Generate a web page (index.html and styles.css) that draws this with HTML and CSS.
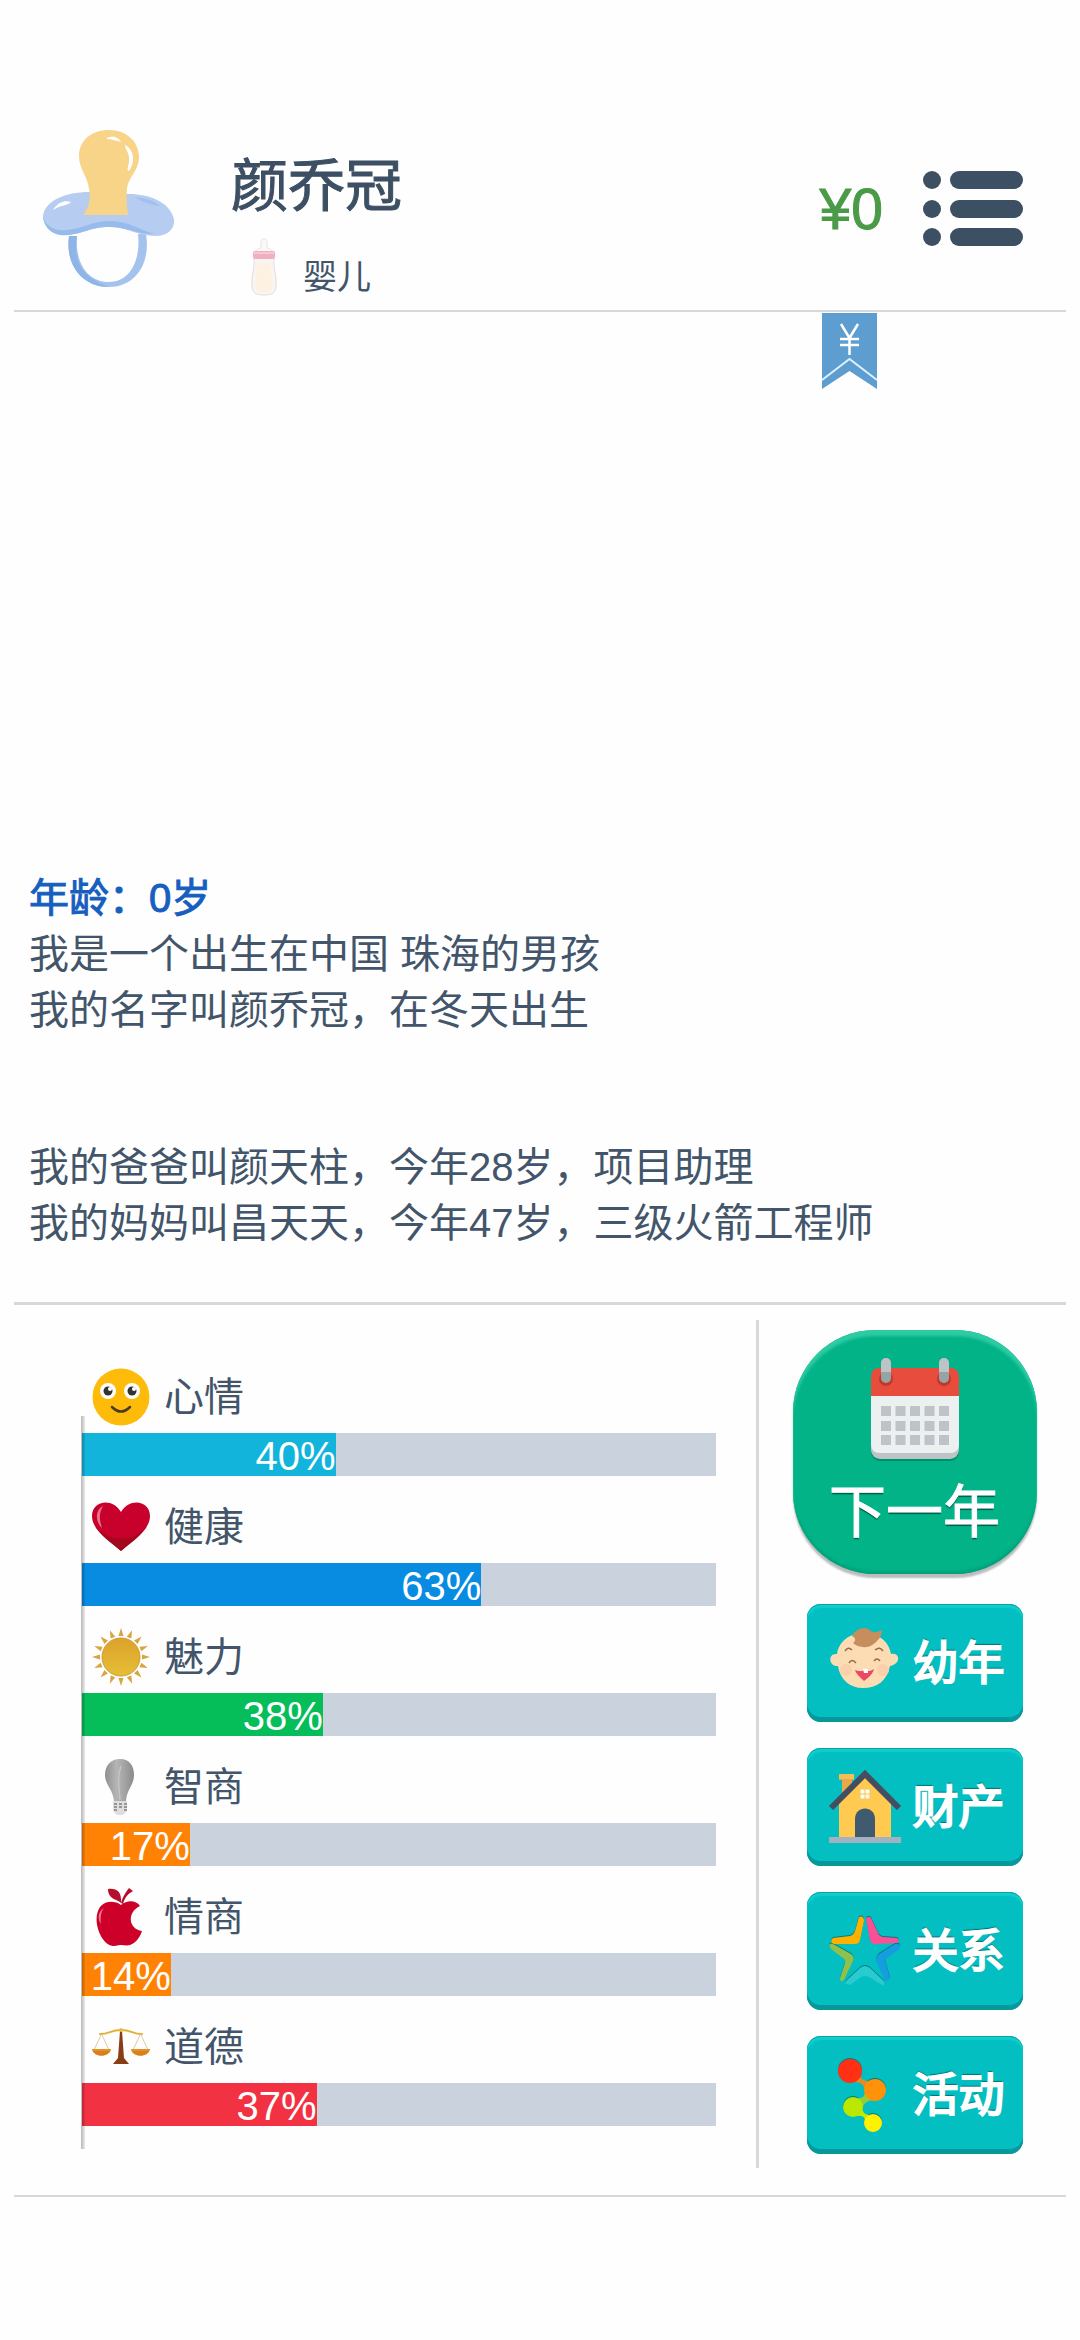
FILE: index.html
```html
<!DOCTYPE html>
<html lang="zh-CN">
<head>
    <meta charset="UTF-8">
    <meta name="viewport" content="width=device-width, initial-scale=1">
    <title>人生模拟</title>
    <link rel="stylesheet" href="styles.css">
</head>
<body>
    <header class="header">
        <svg class="avatar" viewBox="0 0 132 158">
            <path d="M26 106 C22 136 40 157 66 157 C92 157 108 134 103 104 L95 104 C98 132 86 152 66 152 C45 152 32 134 34 106 Z" fill="#a3c3ee"/>
            <path d="M26 106 C22 136 40 157 66 157 C50 151 28 140 34 106 Z" fill="#8fb5e6"/>
            <path d="M47 62 C20 62 0 72 0 88 C2 100 12 106 26 105 C42 103 48 97 66 97 C84 97 92 105 112 106 C125 106 132 99 131 89 C127 73 108 64 86 64 Z" fill="#b6cdf1"/>
            <path d="M0 84 C0 95 12 102 24 100 C42 98 46 92 66 91 C86 91 96 100 112 104 C96 105 84 97 66 97 C48 97 42 103 26 105 C10 107 0 98 0 84 Z" fill="#97bbea"/>
            <path d="M92 67 C104 68 112 71 117 76 C108 75 99 72 92 67 Z" fill="#a2c0ed"/>
            <path d="M40 85 C46 78 48 68 46 59 C45 47 36 39 36 26 C36 10 49 0 66 0 C84 0 96 12 96 27 C96 41 86 46 84 58 C83 68 84 77 85 85 Z" fill="#f8d488"/>
            <path d="M64 8 C71 5 76 8 78 12 C74 11 69 9 64 9 Z M82 15 C92 20 92 33 86 41 C83 40 86 36 86 30 C87 23 82 20 82 15 Z M10 80 C15 72 22 70 28 72 C24 76 17 75 10 80 Z" fill="#fff"/>
        </svg>

        <div class="profile">
            <h1 class="name">颜乔冠</h1>
            <div class="stage">
                <svg class="bottle" viewBox="0 0 28 58">
                    <path d="M11 10 V4 C11 0 17 0 17 4 V10 C22 11 23 13 23 16 H5 C5 13 6 11 11 10 Z" fill="#fbf8f5" stroke="#e9e4e2"/>
                    <path d="M4 20 H24 C23 32 27 38 26 48 C26 55 22 57 14 57 C6 57 2 55 2 48 C1 38 5 32 4 20 Z" fill="#f8f5f3" stroke="#e2dddb"/>
                    <path d="M6 26 C12 24 18 24 21 26 C20 35 23 42 22 52 C18 55 9 55 6 52 C5 42 7 36 6 26 Z" fill="#fdf2e2"/>
                    <rect x="3" y="13" width="22" height="8" rx="2" fill="#efb0c2"/>
                    <path d="M4 15 H24" stroke="#f6c8d4" stroke-width="2"/>
                </svg>
                <span>婴儿</span>
            </div>
        </div>

        <div class="wallet">
            <span class="money">¥0</span>
            <button class="menu-btn" type="button" aria-label="菜单">
                <svg viewBox="0 0 100 76" fill="#3d4f63">
                    <circle cx="9" cy="9" r="9"/>
                    <circle cx="9" cy="38" r="9"/>
                    <circle cx="9" cy="66" r="9"/>
                    <rect x="27" y="0" width="73" height="18" rx="9"/>
                    <rect x="27" y="29" width="73" height="18" rx="9"/>
                    <rect x="27" y="57" width="73" height="18" rx="9"/>
                </svg>
            </button>
        </div>
    </header>

    <main class="log">
        <button class="ribbon" type="button" aria-label="账单">
            <svg viewBox="0 0 55 76">
                <path d="M0 0 H55 V76 L27.500 58 L0 76 Z" fill="#5d9dcf"/>
                <path d="M0 67 L27.500 46 L55 67" fill="none" stroke="#dcf2ff" stroke-width="2"/>
                <path d="M19 11 L27.500 25 L36 11 M27.500 25 V42 M18 26 H37 M18 32 H37" fill="none" stroke="#fff" stroke-width="2.500"/>
            </svg>
        </button>
        <h2 class="age">年龄：0岁</h2>
        <p>我是一个出生在中国 珠海的男孩</p>
        <p>我的名字叫颜乔冠，在冬天出生</p>
        <p class="family">我的爸爸叫颜天柱，今年28岁，项目助理</p>
        <p>我的妈妈叫昌天天，今年47岁，三级火箭工程师</p>
    </main>

    <section class="panel">
        <div class="stats">
            <div class="stat">
                <div class="stat-head">
                    <svg class="stat-icon" viewBox="0 0 58 58">
                        <circle cx="29" cy="29" r="28.500" fill="#ffbb0a"/>
                        <circle cx="16" cy="23" r="8" fill="#fff"/>
                        <circle cx="40" cy="23" r="8" fill="#fff"/>
                        <circle cx="16" cy="23" r="4.500" fill="#333"/>
                        <circle cx="40" cy="23" r="4.500" fill="#333"/>
                        <circle cx="18" cy="21" r="2" fill="#fff"/>
                        <circle cx="42" cy="21" r="2" fill="#fff"/>
                        <path d="M20 39 Q29 48 38 39" fill="none" stroke="#4a3c1e" stroke-width="2.500" stroke-linecap="round"/>
                    </svg>
                    <span>心情</span>
                </div>
                <div class="bar"><div class="fill mood" style="width: 40%">40%</div></div>
            </div>

            <div class="stat">
                <div class="stat-head">
                    <svg class="stat-icon" viewBox="0 0 58 58">
                        <path d="M29 53 C20 45 0 33 0 18 C0 3 20 -1 29 14 C38 -1 58 3 58 18 C58 33 38 45 29 53 Z" fill="#c8002c"/>
                        <path d="M29 53 C20 45 8 37 3 28 C16 45 42 45 55 28 C50 37 38 45 29 53 Z" fill="#a3071c"/>
                        <path d="M11 8 C2 13 4 25 10 30 C7 21 7 15 11 8 Z" fill="#ea7289"/>
                    </svg>
                    <span>健康</span>
                </div>
                <div class="bar"><div class="fill health" style="width: 63%">63%</div></div>
            </div>

            <div class="stat">
                <div class="stat-head">
                    <svg class="stat-icon" viewBox="0 0 58 58">
                        <defs>
                            <linearGradient id="sun" x1="0" y1="0" x2="0" y2="1">
                                <stop offset="0" stop-color="#dba22b"/>
                                <stop offset="1" stop-color="#e6be35"/>
                            </linearGradient>
                            <path id="ray" d="M26.500 8 L29 0 L31.500 8 Z"/>
                        </defs>
                        <g fill="#d8a53d">
                            <use href="#ray"/>
                            <use href="#ray" transform="rotate(22.500 29 29)"/>
                            <use href="#ray" transform="rotate(45 29 29)"/>
                            <use href="#ray" transform="rotate(67.500 29 29)"/>
                            <use href="#ray" transform="rotate(90 29 29)"/>
                            <use href="#ray" transform="rotate(112.500 29 29)"/>
                            <use href="#ray" transform="rotate(135 29 29)"/>
                            <use href="#ray" transform="rotate(157.500 29 29)"/>
                            <use href="#ray" transform="rotate(180 29 29)"/>
                            <use href="#ray" transform="rotate(202.500 29 29)"/>
                            <use href="#ray" transform="rotate(225 29 29)"/>
                            <use href="#ray" transform="rotate(247.500 29 29)"/>
                            <use href="#ray" transform="rotate(270 29 29)"/>
                            <use href="#ray" transform="rotate(292.500 29 29)"/>
                            <use href="#ray" transform="rotate(315 29 29)"/>
                            <use href="#ray" transform="rotate(337.500 29 29)"/>
                        </g>
                        <circle cx="29" cy="29" r="19" fill="url(#sun)" stroke="#cf9a35"/>
                    </svg>
                    <span>魅力</span>
                </div>
                <div class="bar"><div class="fill charm" style="width: 38%">38%</div></div>
            </div>

            <div class="stat">
                <div class="stat-head">
                    <svg class="stat-icon" viewBox="0 0 58 58">
                        <defs>
                            <linearGradient id="bulb" x1="0" y1="0" x2="1" y2="0">
                                <stop offset="0" stop-color="#8f8f8f"/>
                                <stop offset="0.400" stop-color="#b5b5b5"/>
                                <stop offset="0.700" stop-color="#a2a2a2"/>
                                <stop offset="1" stop-color="#8a8a8a"/>
                            </linearGradient>
                        </defs>
                        <path d="M28 1 C18 1 13 8 13 17 C13 27 21 31 22 43 H34 C35 31 42 27 42 17 C42 8 38 1 28 1 Z" fill="url(#bulb)"/>
                        <path d="M29 8 C25 18 27 29 28 42" fill="none" stroke="#c4c4c4" stroke-width="1.500"/>
                        <path d="M21 43 H35 V53 L31 57 H25 L21 53 Z" fill="#dedede"/>
                        <path d="M22 46 H25 M22 49 H25 M22 52 H25 M27 46 H30 M27 49 H30 M32 46 H35 M32 49 H35 M32 52 H35" stroke="#808080" stroke-width="1.500"/>
                    </svg>
                    <span>智商</span>
                </div>
                <div class="bar"><div class="fill low" style="width: 17%">17%</div></div>
            </div>

            <div class="stat">
                <div class="stat-head">
                    <svg class="stat-icon" viewBox="0 0 58 58">
                        <path d="M29 17 C22 12 10 12 6 23 C1 36 10 57 21 58 C25 58 26 57 29 57 C32 57 34 58 38 57 C44 55 48 49 50 43 C36 41 35 24 48 18 C44 12 35 12 29 17 Z" fill="#cc0029"/>
                        <path d="M29 15 C26 11 16 12 16 1 C24 0 30 3 29 15 C31 8 34 4 37 0 L41 3 C36 6 33 9 31 16 Z" fill="#b80e2d"/>
                        <path d="M12 20 C5 24 6 32 9 36 C8 29 9 24 12 20 Z" fill="#ef7990"/>
                    </svg>
                    <span>情商</span>
                </div>
                <div class="bar"><div class="fill low" style="width: 14%">14%</div></div>
            </div>

            <div class="stat">
                <div class="stat-head">
                    <svg class="stat-icon" viewBox="0 0 58 58">
                        <path d="M9 17 L2 32 M10 17 L17 32 M48 17 L41 32 M49 17 L56 32" stroke="#dccba8" stroke-width="1"/>
                        <path d="M8 16 C18 16 18 12 29 12 C40 12 40 16 50 16" fill="none" stroke="#dfb23a" stroke-width="2" stroke-linecap="round"/>
                        <path d="M28 13 H30 L32 40 L37 46 H21 L26 40 Z" fill="#8a3c16"/>
                        <circle cx="29" cy="12" r="2" fill="#e6bd45"/>
                        <path d="M0 31 H19 C18 40 1 40 0 31 Z M39 31 H58 C57 40 40 40 39 31 Z" fill="#d9801a"/>
                        <path d="M0 32 H19 M39 32 H58" stroke="#efa437" stroke-width="1"/>
                    </svg>
                    <span>道德</span>
                </div>
                <div class="bar"><div class="fill moral" style="width: 37%">37%</div></div>
            </div>
        </div>

        <nav class="actions">
            <button class="next-btn" type="button">
                <svg viewBox="0 0 88 102">
                    <rect x="0" y="16" width="88" height="87" rx="9" fill="#008f69"/>
                    <rect x="0" y="14" width="88" height="87" rx="9" fill="#bdc3c7"/>
                    <path d="M0 30 H88 V86 Q88 95 79 95 H9 Q0 95 0 86 Z" fill="#ecf0f1"/>
                    <path d="M0 38 V19 Q0 10 9 10 H79 Q88 10 88 19 V38 Z" fill="#e74c3c"/>
                    <circle cx="15" cy="21" r="7" fill="#c0392b"/>
                    <circle cx="73" cy="21" r="7" fill="#c0392b"/>
                    <rect x="10" y="0" width="10" height="25" rx="5" fill="#95a5a6"/>
                    <rect x="68" y="0" width="10" height="25" rx="5" fill="#95a5a6"/>
                    <path d="M10 14 V5 a5 5 0 0 1 10 0 V14 Z M68 14 V5 a5 5 0 0 1 10 0 V14 Z" fill="#bdc3c7"/>
                    <path d="M10 53 H78 M10 68 H78 M10 82 H78" fill="none" stroke="#bdc3c7" stroke-width="10" stroke-dasharray="10 4.500"/>
                </svg>
                <span>下一年</span>
            </button>

            <button class="action-btn" type="button">
                <svg viewBox="0 0 72 72">
                    <path d="M8 27 C10 14 21 6 35 6 C50 6 60 15 62 27 C69 25 72 33 66 37 C64 38 62 39 61 39 C58 54 48 61 34 61 C21 61 11 53 9 39 C0 40 -2 26 8 27 Z" fill="#fbdcb3"/>
                    <circle cx="17" cy="43" r="6" fill="#fbd0aa"/>
                    <circle cx="54" cy="43" r="6" fill="#fbd0aa"/>
                    <path d="M23 9 C28 1 37 -2 43 5 C47 6 50 4 53 3 C53 10 48 14 46 16 C40 22 29 21 24 16 C27 14 27 11 23 9 Z" fill="#c68e5c"/>
                    <path d="M16 24 Q19 19 23 23 M46 23 Q51 19 54 24 M20 36 Q23 31 27 36 M45 34 Q48 30 51 34" fill="none" stroke="#9b6b45" stroke-width="1.500"/>
                    <path d="M26 43 C31 45 34 44 36 43 C39 45 42 44 45 42 C44 47 39 51 35 54 C31 50 27 47 26 43 Z" fill="#eb4767"/>
                    <path d="M34 42 H39 V46 H35 Z" fill="#fff"/>
                </svg>
                <span>幼年</span>
            </button>

            <button class="action-btn" type="button">
                <svg viewBox="0 0 72 72">
                    <path d="M10 3 H25 V9 H23 V26 H13 V9 H10 Z" fill="#e8a94a"/>
                    <path d="M10 3 H25 V8 H10 Z" fill="#f5bd55"/>
                    <path d="M10 31 L36 5 L62 31 V66 H10 Z" fill="#ffca4f"/>
                    <path d="M2 37 L36 3 L70 37" fill="none" stroke="#454e60" stroke-width="6"/>
                    <path d="M26 66 V48 C26 34 46 34 46 48 V66 Z" fill="#405a70"/>
                    <path d="M31 18 H41 V28 H31 Z M36 18 V28 M31 23 H41" fill="#fffbe4" stroke="#efc76a" stroke-width="1"/>
                    <path d="M0 66 H72 V72 H0 Z" fill="#a3b1c1"/>
                </svg>
                <span>财产</span>
            </button>

            <button class="action-btn" type="button">
                <svg viewBox="0 0 72 72">
                    <defs>
                        <g id="star">
                            <path d="M30 2 Q35 0 35 6 L31 25 Q30 29 26 29 L5 29 Q0 27 4 23 L21 21 Q25 20 26 16 Z"/>
                            <path d="M37 4 Q38 0 42 3 L49 18 Q50 21 54 22 L68 23 Q72 26 67 28 L47 29 Q42 29 41 25 Z"/>
                            <path d="M0 30 Q2 27 6 30 L22 39 Q26 42 24 46 L15 65 Q11 68 11 63 L16 48 Q17 45 14 43 L2 34 Z"/>
                            <path d="M71 30 Q72 33 68 36 L58 43 Q56 45 57 49 L61 63 Q60 67 56 65 L48 48 Q46 43 50 39 L66 29 Q70 28 71 30 Z"/>
                            <path d="M17 69 Q16 66 20 63 L31 53 Q36 49 41 53 L55 66 Q57 70 53 70 L40 62 Q36 60 32 62 L21 70 Z"/>
                        </g>
                    </defs>
                    <use href="#star" y="-1" fill="#08777b"/>
                    <path d="M30 2 Q35 0 35 6 L31 25 Q30 29 26 29 L5 29 Q0 27 4 23 L21 21 Q25 20 26 16 Z" fill="#ffb100"/>
                    <path d="M37 4 Q38 0 42 3 L49 18 Q50 21 54 22 L68 23 Q72 26 67 28 L47 29 Q42 29 41 25 Z" fill="#fd4f95"/>
                    <path d="M0 30 Q2 27 6 30 L22 39 Q26 42 24 46 L15 65 Q11 68 11 63 L16 48 Q17 45 14 43 L2 34 Z" fill="#8fc24c"/>
                    <path d="M71 30 Q72 33 68 36 L58 43 Q56 45 57 49 L61 63 Q60 67 56 65 L48 48 Q46 43 50 39 L66 29 Q70 28 71 30 Z" fill="#169de0"/>
                    <path d="M17 69 Q16 66 20 63 L31 53 Q36 49 41 53 L55 66 Q57 70 53 70 L40 62 Q36 60 32 62 L21 70 Z" fill="#2acbd0"/>
                </svg>
                <span>关系</span>
            </button>

            <button class="action-btn" type="button">
                <svg viewBox="0 0 72 72">
                    <g fill="#08777b" transform="translate(0 -1)">
                        <circle cx="21" cy="12" r="12"/>
                        <circle cx="46" cy="31" r="11"/>
                        <circle cx="24" cy="48" r="10"/>
                        <circle cx="44" cy="64" r="9"/>
                    </g>
                    <path d="M31 17 Q33 23 42 22 L36 32 Q35 23 26 23 Z" fill="#e98a21"/>
                    <path d="M36 33 Q36 40 28 39 L33 51 Q34 42 44 41 Z" fill="#8fd03a"/>
                    <path d="M33 48 Q33 55 40 56 L36 62 Q36 56 28 57 Z" fill="#c7e900"/>
                    <circle cx="21" cy="12" r="12" fill="#ff3014"/>
                    <circle cx="46" cy="31" r="11" fill="#ff9208"/>
                    <circle cx="24" cy="48" r="10" fill="#bbe800"/>
                    <circle cx="44" cy="64" r="9" fill="#fff200"/>
                </svg>
                <span>活动</span>
            </button>
        </nav>
    </section>
</body>
</html>
```
FILE: styles.css
```css
* {
    box-sizing: border-box;
}

body {
    margin: 0;
    padding: 130px 14px 143px;
    min-height: 100vh;
    display: flex;
    flex-direction: column;
    background: #fefefe;
    color: #42556a;
    font-family: "Liberation Sans", "Noto Sans CJK SC", sans-serif;
    font-size: 40px;
}

h1, h2, p {
    margin: 0;
}

button {
    padding: 0;
    border: none;
    background: none;
    font-family: inherit;
    cursor: pointer;
}

svg {
    display: block;
    overflow: visible;
}

/* header */
.header {
    display: flex;
    align-items: flex-start;
    padding: 0 43px 14px 29px;
    border-bottom: 2px solid #d8d8d8;
}

.avatar {
    width: 132px;
    height: 158px;
}

.profile {
    flex: 1;
    padding: 24px 0 0 56px;
}

.name {
    color: #3d4f63;
    font-size: 57px;
    line-height: 64px;
    font-weight: 400;
    -webkit-text-stroke: 1px currentColor;
}

.stage {
    display: flex;
    align-items: flex-end;
    gap: 25px;
    margin-top: 20px;
    padding-left: 19px;
    font-size: 34px;
    line-height: 38px;
}

.bottle {
    width: 28px;
    height: 58px;
}

.wallet {
    display: flex;
    align-items: center;
    gap: 40px;
    height: 158px;
}

.money {
    color: #4a9a48;
    font-size: 57px;
    line-height: 64px;
    -webkit-text-stroke: 1px currentColor;
}

.menu-btn svg {
    width: 100px;
    height: 76px;
}

/* life log */
.log {
    flex: 1;
    display: flex;
    flex-direction: column;
    padding: 1px 15px 51px;
    border-bottom: 3px solid #d8d8d8;
    line-height: 56px;
}

.ribbon {
    align-self: flex-end;
    margin: 0 174px auto 0;
}

.ribbon svg {
    width: 55px;
    height: 76px;
}

.age {
    color: #165fbf;
    font-size: 40px;
    font-weight: 400;
    -webkit-text-stroke: 1px currentColor;
}

.family {
    margin-top: 101px;
}

/* bottom panel */
.panel {
    display: flex;
    padding: 15px 0 27px;
    border-bottom: 2px solid #d8d8d8;
}

.stats {
    flex: 1;
    position: relative;
    padding: 48px 40px 20px 68px;
    border-right: 3px solid #d8d8d8;
}

/* axis line over the left end of the bars */
.stats::after {
    content: "";
    position: absolute;
    left: 67px;
    top: 96px;
    bottom: 19px;
    width: 4px;
    background: linear-gradient(to right, rgba(0,0,0,0.28), rgba(0,0,0,0.08));
}

.stat {
    margin-bottom: 22px;
}

.stat-head {
    display: flex;
    align-items: center;
    gap: 14px;
    height: 58px;
    margin-bottom: 7px;
    padding-left: 10px;
    line-height: 40px;
}

.stat-icon {
    width: 58px;
    height: 58px;
}

.bar {
    height: 43px;
    background: #cad3dd;
}

.fill {
    height: 100%;
    color: #fff;
    line-height: 46px;
    text-align: right;
}

.mood { background: #12b4dc; }
.health { background: #078ce2; }
.charm { background: #05be5a; }
.low { background: #ff8205; }
.moral { background: #f23243; }

/* buttons on the right */
.actions {
    display: flex;
    flex-direction: column;
    align-items: center;
    gap: 26px;
    width: 307px;
    padding: 10px 0 0 4px;
}

.actions button {
    color: #fff;
}

.next-btn {
    display: flex;
    flex-direction: column;
    align-items: center;
    gap: 20px;
    width: 244px;
    height: 244px;
    margin-bottom: 4px;
    padding-top: 28px;
    border-radius: 82px;
    background: #02b388;
    box-shadow: inset 0 6px 3px #2fcba3, inset 0 -3px 3px #00a27b, 0 4px 2px #bcbcbc;
    font-size: 57px;
    line-height: 64px;
    text-shadow: 0 2px 1px rgba(0,0,0,0.5);
    -webkit-text-stroke: 1px currentColor;
}

.next-btn svg {
    width: 88px;
    height: 102px;
}

.action-btn {
    display: flex;
    align-items: center;
    gap: 12px;
    width: 216px;
    height: 118px;
    padding: 0 0 0 22px;
    border-radius: 14px;
    background: #04bfc1;
    box-shadow: inset 0 -5px 0 #06989a, inset 0 1px 0 #14a0a2, inset 0 4px 1px #0dcfd0;
    font-size: 46px;
    line-height: 56px;
    text-shadow: 0 -2px 1px rgba(0,0,0,0.4);
    -webkit-text-stroke: 2px currentColor;
}

.action-btn svg {
    width: 72px;
    height: 72px;
}
```
